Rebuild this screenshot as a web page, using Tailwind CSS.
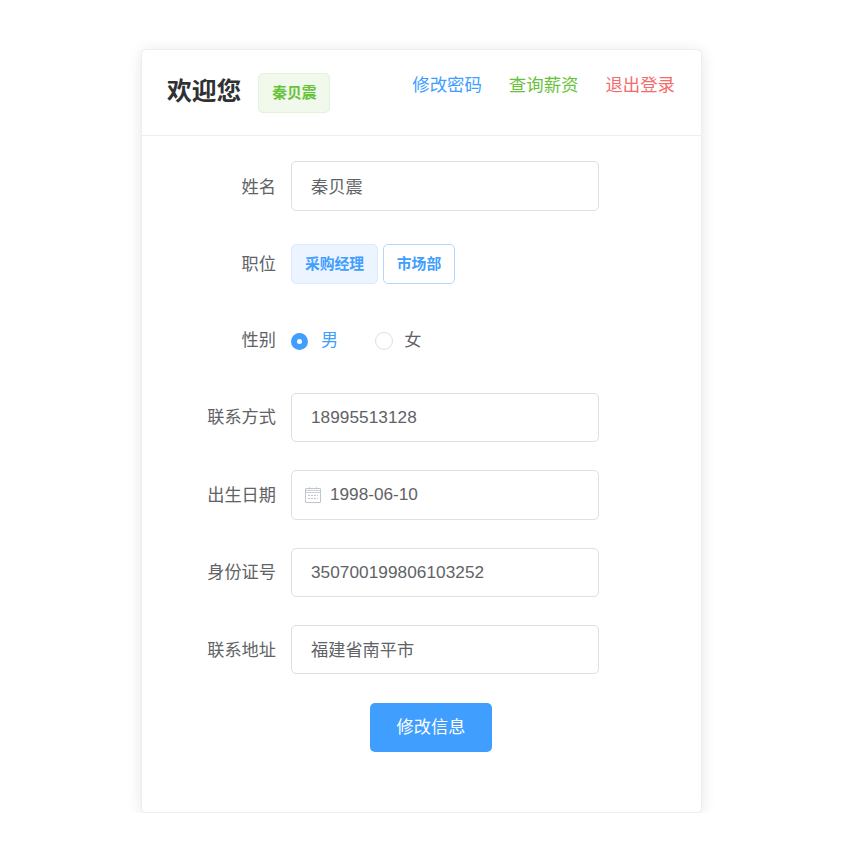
<!DOCTYPE html>
<html lang="zh-CN">
<head>
    <meta charset="UTF-8">
    <title>个人信息</title>
    <script src="https://cdn.jsdelivr.net/npm/@tailwindcss/browser@4"></script>
</head>
<body class="bg-white font-['Liberation_Sans','Noto_Sans_CJK_SC',sans-serif] text-[17.2px] text-[#606266]">
<div class="pt-[49px] pl-[141px]">
    <div class="w-[561px] h-[764px] rounded-[5px] border border-[#ebeef5] bg-white shadow-[0_2px_15px_0_rgba(0,0,0,0.1)]">
        <!-- Header -->
        <div class="flex h-[86px] justify-between border-b border-[#ebeef5] pl-[25px] pr-[26px]">
            <div class="flex items-start">
                <h1 class="mt-[24px] text-[24.8px] leading-[36px] font-bold text-[#303133]">欢迎您</h1>
                <span class="mt-[23px] ml-[17px] flex h-[40px] w-[72px] items-center justify-center rounded-[5px] border border-[#e1f3d8] bg-[#f0f9eb] pt-[1px] text-[14.8px] font-bold text-[#67c23a]">秦贝震</span>
            </div>
            <div class="mt-[23px] flex gap-[27px] text-[17.4px] leading-[24px]">
                <a class="text-[#409eff]">修改密码</a>
                <a class="text-[#67c23a]">查询薪资</a>
                <a class="text-[#f56c6c]">退出登录</a>
            </div>
        </div>

        <!-- Form -->
        <form class="pt-[25px]">
            <div class="mb-[33px] flex items-center">
                <label class="w-[134px] pt-[3px] text-right">姓名</label>
                <div class="ml-[15px] flex h-[50px] w-[308px] items-center rounded-[5px] border border-[#dcdfe6] pt-[3px] pl-[19px]">秦贝震</div>
            </div>
            <div class="mb-[37px] flex h-[40px] items-center">
                <label class="w-[134px] pt-[1px] text-right">职位</label>
                <span class="ml-[15px] flex h-[40px] w-[87px] items-center justify-center rounded-[5px] border border-[#d9ecff] bg-[#ecf5ff] text-[14.8px] font-bold text-[#409eff]">采购经理</span>
                <span class="ml-[5px] flex h-[40px] w-[72px] items-center justify-center rounded-[5px] border border-[#b3d8ff] bg-white text-[14.8px] font-bold text-[#409eff]">市场部</span>
            </div>
            <div class="mb-[32px] flex h-[40px] items-center">
                <label class="w-[134px] text-right">性别</label>
                <span class="ml-[15px] flex h-[17px] w-[17px] items-center justify-center rounded-full bg-[#409eff]">
                    <span class="h-[5px] w-[5px] rounded-full bg-white"></span>
                </span>
                <span class="ml-[13px] text-[#409eff]">男</span>
                <span class="ml-[37px] h-[18px] w-[18px] rounded-full border border-[#dcdfe6] bg-white"></span>
                <span class="ml-[11px]">女</span>
            </div>
            <div class="mb-[28px] flex items-center">
                <label class="w-[134px] text-right">联系方式</label>
                <div class="ml-[15px] flex h-[49px] w-[308px] items-center rounded-[5px] border border-[#dcdfe6] pl-[19px] tracking-[0.06px]">18995513128</div>
            </div>
            <div class="mb-[28px] flex items-center">
                <label class="w-[134px] pt-[1px] text-right">出生日期</label>
                <div class="ml-[15px] flex h-[50px] w-[308px] items-center rounded-[5px] border border-[#dcdfe6] pl-[13px]">
                    <svg class="h-[16px] w-[16px]" viewBox="0 0 16 16" fill="none" stroke="#c0c4cc">
                        <rect x="0.5" y="1.5" width="15" height="14" rx="0.5"/>
                        <path d="M0 3.5h16M0 5.5h16M4.5 0v2.5M11.5 0v2.5" stroke-opacity="0.8"/>
                        <path d="M3 8.5h10M3 11.5h10" stroke-dasharray="2 1"/>
                    </svg>
                    <span class="ml-[9px]">1998-06-10</span>
                </div>
            </div>
            <div class="mb-[28px] flex items-center">
                <label class="w-[134px] text-right">身份证号</label>
                <div class="ml-[15px] flex h-[49px] w-[308px] items-center rounded-[5px] border border-[#dcdfe6] pl-[19px] tracking-[0.06px]">350700199806103252</div>
            </div>
            <div class="mb-[29px] flex items-center">
                <label class="w-[134px] pt-[3px] text-right">联系地址</label>
                <div class="ml-[15px] flex h-[49px] w-[308px] items-center rounded-[5px] border border-[#dcdfe6] pt-[3px] pl-[19px]">福建省南平市</div>
            </div>
            <div class="pl-[228px]">
                <button type="button" class="h-[49px] w-[122px] rounded-[5px] bg-[#409eff] text-white">修改信息</button>
            </div>
        </form>
    </div>
</div>
</body>
</html>
